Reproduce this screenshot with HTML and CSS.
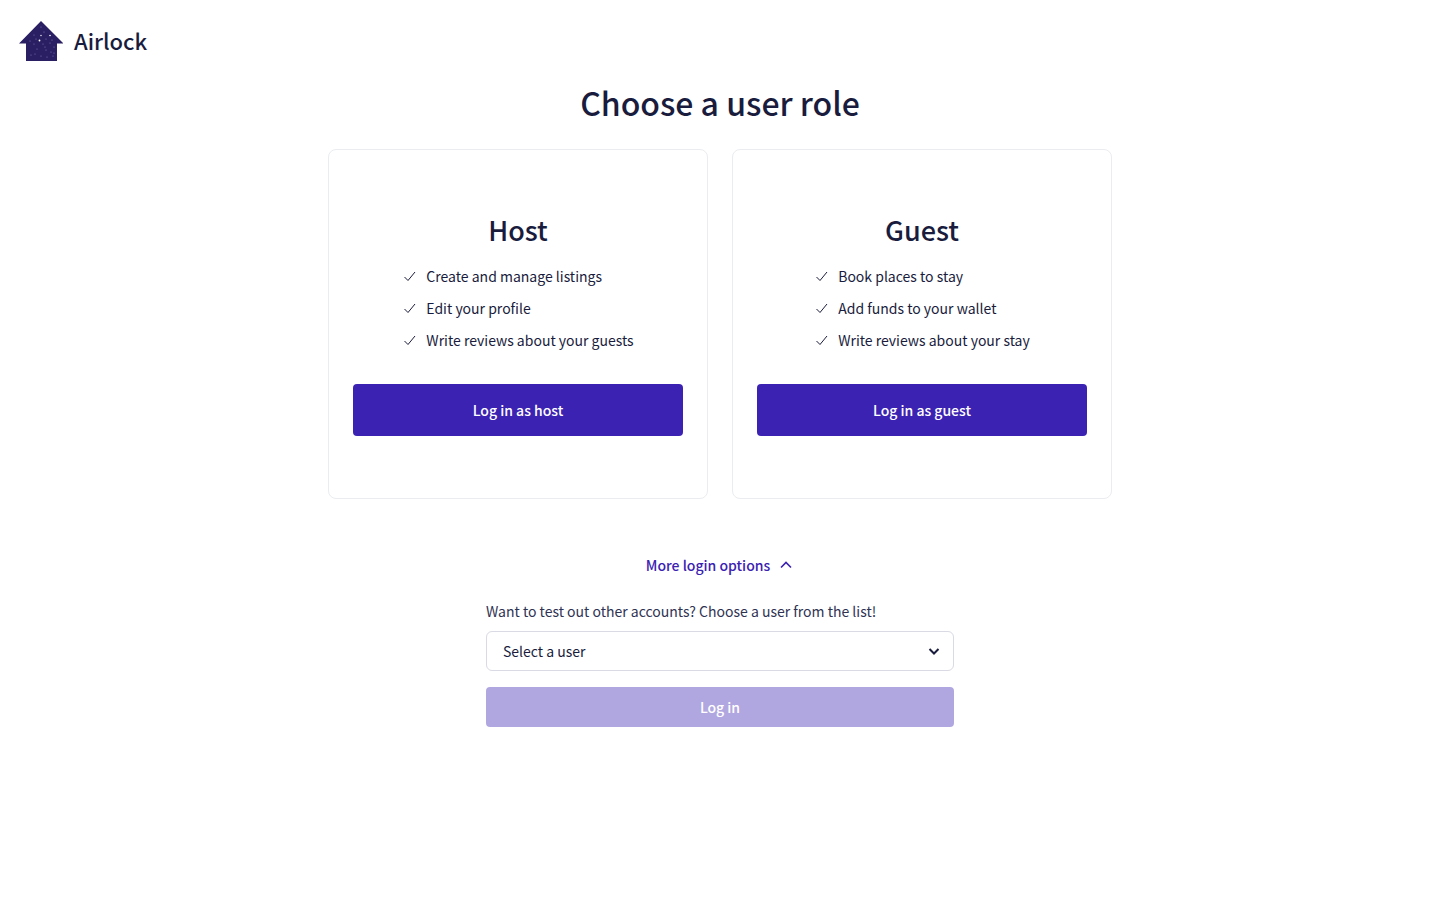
FILE: index.html
```html
<!DOCTYPE html>
<html lang="en">
<head>
    <meta charset="UTF-8">
    <meta name="viewport" content="width=device-width, initial-scale=1.0">
    <title>Airlock</title>
    <link rel="stylesheet" href="styles.css">
</head>
<body>
    <header class="header">
        <a class="brand" href="#">
            <svg class="brand-logo" width="44" height="40" viewBox="0 1 44 40" aria-hidden="true">
                <path fill="#2a1f63" d="M22 1 44.5 23.5H38V41H7V23.5H0Z"/>
                <g fill="#fff">
                    <circle cx="22" cy="15.500" r=".7"/><circle cx="31" cy="15.500" r=".8"/><circle cx="20.5" cy="20.5" r=".9"/>
                </g>
                <g fill="#8d83c0">
                    <circle cx="22" cy="7" r=".5"/><circle cx="25" cy="12" r=".5"/><circle cx="15" cy="15" r=".5"/>
                    <circle cx="17" cy="19" r=".5"/><circle cx="27" cy="19" r=".5"/><circle cx="33" cy="20" r=".5"/>
                    <circle cx="11" cy="21" r=".5"/><circle cx="15" cy="24" r=".5"/><circle cx="24" cy="24" r=".5"/>
                    <circle cx="31" cy="23" r=".5"/><circle cx="35" cy="27" r=".5"/><circle cx="26" cy="27" r=".5"/>
                    <circle cx="18" cy="29" r=".5"/><circle cx="27" cy="30" r=".5"/><circle cx="32" cy="32" r=".5"/>
                    <circle cx="12" cy="35" r=".5"/><circle cx="16" cy="34" r=".5"/><circle cx="22" cy="36" r=".5"/>
                    <circle cx="28" cy="37" r=".5"/><circle cx="34" cy="36" r=".5"/><circle cx="35" cy="33" r=".5"/>
                </g>
            </svg>
            <span class="brand-name">Airlock</span>
        </a>
    </header>

    <main class="main">
        <h1>Choose a user role</h1>

        <div class="roles">
            <section class="role-card">
                <h2>Host</h2>
                <ul class="role-list">
                    <li><svg class="check" viewBox="0 0 16 16" aria-hidden="true"><path d="M2.5 9l3.500 3.500L13 4"/></svg>Create and manage listings</li>
                    <li><svg class="check" viewBox="0 0 16 16" aria-hidden="true"><path d="M2.5 9l3.500 3.500L13 4"/></svg>Edit your profile</li>
                    <li><svg class="check" viewBox="0 0 16 16" aria-hidden="true"><path d="M2.5 9l3.500 3.500L13 4"/></svg>Write reviews about your guests</li>
                </ul>
                <button class="btn btn-large" type="button">Log in as host</button>
            </section>
            <section class="role-card">
                <h2>Guest</h2>
                <ul class="role-list">
                    <li><svg class="check" viewBox="0 0 16 16" aria-hidden="true"><path d="M2.5 9l3.500 3.500L13 4"/></svg>Book places to stay</li>
                    <li><svg class="check" viewBox="0 0 16 16" aria-hidden="true"><path d="M2.5 9l3.500 3.500L13 4"/></svg>Add funds to your wallet</li>
                    <li><svg class="check" viewBox="0 0 16 16" aria-hidden="true"><path d="M2.5 9l3.500 3.500L13 4"/></svg>Write reviews about your stay</li>
                </ul>
                <button class="btn btn-large" type="button">Log in as guest</button>
            </section>
        </div>

        <button class="more-toggle" type="button" aria-expanded="true" aria-controls="loginForm">
            More login options
            <svg class="chevron" viewBox="0 0 16 16" aria-hidden="true"><path d="M3 10.500l5-5 5 5"/></svg>
        </button>

        <form class="login-form" id="loginForm">
            <label for="user">Want to test out other accounts? Choose a user from the list!</label>
            <div class="select-wrap">
                <select id="user">
                    <option>Select a user</option>
                </select>
                <svg class="chevron select-chevron" viewBox="0 0 16 16" aria-hidden="true"><path d="M3.500 6l4.500 4.500L12.500 6"/></svg>
            </div>
            <button class="btn" type="submit" disabled>Log in</button>
        </form>
    </main>
</body>
</html>
```

FILE: styles.css
```css
* {
    box-sizing: border-box;
}

body {
    margin: 0;
    background-color: #fff;
    color: #191c3d;
    font-family: "Noto Sans CJK JP", "Noto Sans", sans-serif;
    font-size: 14px;
    line-height: 24px;
}

button,
select {
    font: inherit;
}

h1,
h2 {
    margin: 0;
    font-weight: 500;
}

/* Header */
.header {
    display: flex;
    padding: 20px 19px;
}

.brand {
    display: flex;
    align-items: center;
    gap: 11px;
    color: inherit;
    text-decoration: none;
}

.brand-logo {
    display: block;
    margin-top: 1px;
    margin-bottom: -1px;
}

.brand-name {
    font-size: 22px;
    font-weight: 500;
}

/* Role cards */
.main {
    display: flex;
    flex-direction: column;
    align-items: center;
}

h1 {
    font-size: 32px;
    line-height: 44px;
}

.roles {
    display: flex;
    gap: 24px;
    width: 100%;
    max-width: 784px;
    margin-top: 25px;
}

.role-card {
    flex: 1;
    display: flex;
    flex-direction: column;
    align-items: center;
    padding: 60px 24px 62px;
    border: 1px solid #ebecf0;
    border-radius: 8px;
}

h2 {
    font-size: 27px;
    line-height: 40px;
}

.role-list {
    display: flex;
    flex-direction: column;
    gap: 8px;
    margin: 14px 0 32px;
    padding: 0;
    list-style: none;
}

.role-list li {
    display: flex;
    align-items: center;
    gap: 8px;
}

.check {
    width: 16px;
    height: 16px;
    fill: none;
    stroke: currentColor;
}

.btn {
    width: 100%;
    height: 40px;
    border: none;
    border-radius: 4px;
    background-color: #3b22b2;
    color: #fff;
    font-weight: 500;
    cursor: pointer;
}

.btn-large {
    height: 52px;
}

.btn:disabled {
    background-color: #b1a7e0;
    cursor: default;
}

/* More options */
.more-toggle {
    display: flex;
    align-items: center;
    gap: 8px;
    margin-top: 54px;
    padding: 0;
    border: none;
    background: none;
    color: #3b22b2;
    font-weight: 500;
    cursor: pointer;
}

.chevron {
    width: 16px;
    height: 16px;
    fill: none;
    stroke: currentColor;
    stroke-width: 1.6;
}

.login-form {
    width: 100%;
    max-width: 468px;
    margin-top: 22px;
}

.login-form label {
    display: block;
    margin-bottom: 8px;
    color: #2f3353;
}

.select-wrap {
    position: relative;
    margin-bottom: 16px;
}

.select-wrap select {
    display: block;
    width: 100%;
    height: 40px;
    padding: 0 16px;
    border: 1px solid #d9dae3;
    border-radius: 6px;
    background-color: #fff;
    color: inherit;
    appearance: none;
}

.select-chevron {
    position: absolute;
    top: 12px;
    right: 12px;
    stroke-width: 2;
    pointer-events: none;
}
```
